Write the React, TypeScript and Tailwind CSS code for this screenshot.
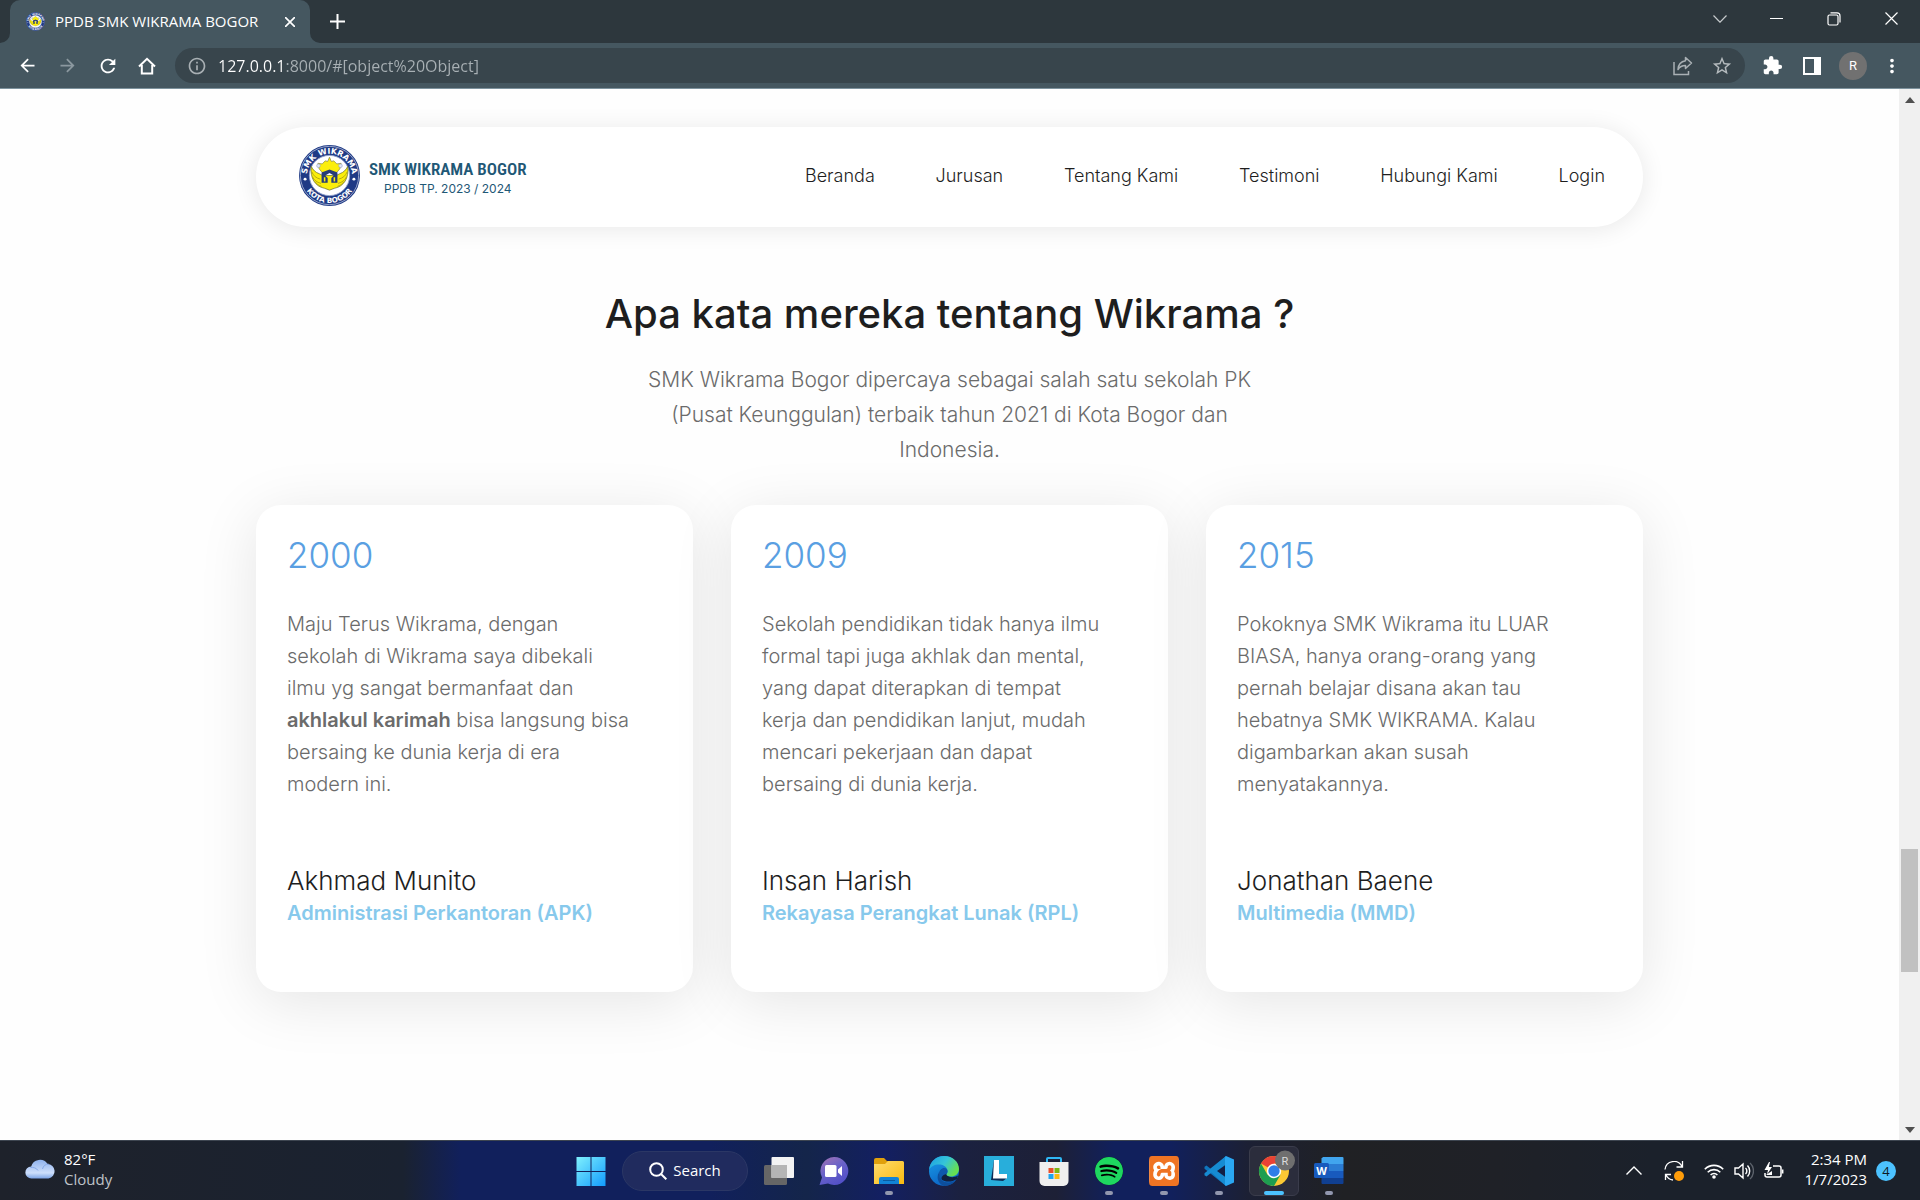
import type { ReactNode } from "react";
import {
  MdArrowBack,
  MdArrowForward,
  MdExtension,
  MdInfoOutline,
  MdMoreVert,
  MdRefresh,
  MdStarBorder,
} from "react-icons/md";
import { SiSpotify, SiXampp } from "react-icons/si";

const segoe = "font-['Open_Sans','Noto_Sans',sans-serif]";

function SchoolSeal({ id, className }: { id: string; className: string }) {
  return (
    <svg viewBox="0 0 100 100" className={className} aria-hidden="true">
      <defs>
        <path id={`${id}-top`} d="M14 60 A37 37 0 1 1 86 60" />
        <path id={`${id}-bottom`} d="M5 50 A45 45 0 0 0 95 50" />
      </defs>
      <circle cx="50" cy="50" r="50" fill="#1f3a85" />
      <circle cx="50" cy="50" r="47.8" fill="none" stroke="#dfe5f4" strokeWidth="1" />
      <circle cx="50" cy="50" r="33" fill="#fff" stroke="#8fa0cc" strokeWidth="1.5" />
      <path
        d="M20 35c-2 19 6 33 22 36l8 3 8-3c16-3 24-17 22-36-3 6-7 10-13 12l-6 3H39l-6-3c-6-2-10-6-13-12z"
        fill="#fbee0b"
        stroke="#6b7230"
        strokeWidth="1.2"
      />
      <path
        d="M31 30l7 1 5-5 4 1 3-7 3 7 4-1 5 5 7-1-2 9-5 6H38l-5-6z"
        fill="#fbee0b"
        stroke="#8a8a4a"
        strokeWidth="1.2"
      />
      <path
        d="M21 44c3 7 7 10 14 12M22 52c3 6 7 9 14 11M26 60c3 4 6 6 11 8M79 44c-3 7-7 10-14 12M78 52c-3 6-7 9-14 11M74 60c-3 4-6 6-11 8"
        fill="none"
        stroke="#a79a13"
        strokeWidth="1.3"
      />
      <circle cx="32" cy="34" r="3" fill="#dfe5f4" stroke="#8fa0cc" />
      <circle cx="68" cy="34" r="3" fill="#dfe5f4" stroke="#8fa0cc" />
      <path d="M37 45l13-5 13 5v17H53v-8l4-4-7-4-7 4 4 4v8H37z" fill="#263c78" />
      <path d="M42 53v7M58 53v7" stroke="#fbee0b" strokeWidth="2.5" />
      <circle cx="10" cy="56" r="2.4" fill="#fff" />
      <circle cx="90" cy="56" r="2.4" fill="#fff" />
      <text fill="#fff" fontSize="13" fontWeight="700" fontFamily="DejaVu Sans, sans-serif" textAnchor="middle">
        <textPath href={`#${id}-top`} startOffset="50%">
          SMK WIKRAMA
        </textPath>
      </text>
      <text fill="#fff" fontSize="12" fontWeight="700" fontFamily="DejaVu Sans, sans-serif" textAnchor="middle">
        <textPath href={`#${id}-bottom`} startOffset="50%">
          KOTA BOGOR
        </textPath>
      </text>
    </svg>
  );
}

function TabStrip() {
  return (
    <div className="flex h-[43px] items-end bg-[#2d373d] text-white">
      <div className="relative ml-[10px] flex h-full w-[300px] items-center rounded-t-[10px] bg-[#455760] pl-4 pr-3">
        <svg viewBox="0 0 10 10" className="absolute -left-[10px] bottom-0 size-[10px]" aria-hidden="true">
          <path d="M10 0v10H0A10 10 0 0 0 10 0z" fill="#455760" />
        </svg>
        <svg viewBox="0 0 10 10" className="absolute -right-[10px] bottom-0 size-[10px]" aria-hidden="true">
          <path d="M0 0v10h10A10 10 0 0 1 0 0z" fill="#455760" />
        </svg>
        <SchoolSeal id="favicon" className="size-[19px]" />
        <span className="ml-[10px] flex-1 whitespace-nowrap text-[15px]">PPDB SMK WIKRAMA BOGOR</span>
        <button aria-label="Close tab" className="flex size-4 items-center justify-center">
          <svg viewBox="0 0 10 10" className="size-[10px]" stroke="#fff" strokeWidth="1.7">
            <path d="M0 0l10 10M10 0L0 10" />
          </svg>
        </button>
      </div>
      <button aria-label="New tab" className="ml-5 flex h-full w-[15px] items-center">
        <svg viewBox="0 0 15 15" className="size-[15px]" stroke="#fff" strokeWidth="2">
          <path d="M7.500 0v15M0 7.500h15" />
        </svg>
      </button>
      <div className="ml-auto flex h-[37px] self-start">
        <button aria-label="Search tabs" className="flex w-[57px] items-center justify-center">
          <svg viewBox="0 0 14 8" className="h-2 w-[14px]" fill="none" stroke="#c7cbcd" strokeWidth="1.200">
            <path d="M.5.5L7 7.200 13.500.5" />
          </svg>
        </button>
        <button aria-label="Minimize" className="flex w-[57px] items-center justify-center">
          <span className="h-px w-[13px] bg-white" />
        </button>
        <button aria-label="Restore" className="flex w-[57px] items-center justify-center">
          <svg viewBox="0 0 14 14" className="size-[14px]" fill="none" stroke="#fff" strokeWidth="1.200">
            <rect x="1" y="3" width="10" height="10" rx="1.500" />
            <path d="M3.500.9h6.500a3 3 0 0 1 3 3v6.500" />
          </svg>
        </button>
        <button aria-label="Close window" className="flex w-[58px] items-center justify-center">
          <svg viewBox="0 0 13 13" className="size-[13px]" stroke="#fff" strokeWidth="1.200">
            <path d="M.5.5l12 12M12.500.5l-12 12" />
          </svg>
        </button>
      </div>
    </div>
  );
}

function Toolbar() {
  return (
    <div className="flex h-[46px] items-center border-b border-[#7d929d] bg-[#455760] pl-[17px] pr-[17px] text-white">
      <div className="flex items-center gap-[19px]">
        <button aria-label="Back">
          <MdArrowBack size={21} />
        </button>
        <button aria-label="Forward" className="text-[#8b989f]">
          <MdArrowForward size={21} />
        </button>
        <button aria-label="Reload">
          <MdRefresh size={22} />
        </button>
        <button aria-label="Home">
          <svg viewBox="0 0 18 18" className="size-[18px]" fill="none" stroke="#fff" strokeWidth="2">
            <path d="M1 9.500L9 1.800l8 7.700M3.800 8v8.500h10.400V8" />
          </svg>
        </button>
      </div>
      <div className="ml-[19px] mr-[17px] flex h-[35px] flex-1 items-center rounded-full bg-[#38454c] pl-3 pr-3">
        <MdInfoOutline size={20} className="text-[#a9b0b4]" />
        <input
          aria-label="Address"
          defaultValue="127.0.0.1:8000/#[object%20Object]"
          className="ml-[11px] h-7 flex-1 bg-[linear-gradient(90deg,#ffffff_68px,#a8b0b4_68px)] bg-clip-text text-base text-transparent caret-white outline-none"
        />
        <div className="flex items-center gap-[18px]">
          <button aria-label="Share">
            <svg viewBox="0 0 20 20" className="size-5" fill="none" stroke="#a9b0b4" strokeWidth="1.500">
              <path d="M1 6v12.500h14.500V15" />
              <path d="M12.500 1.500l6 5.500-6 5.500V9.500C9 9.500 6.500 11 5 13.500c.3-5 3-8 7.500-8.700z" strokeLinejoin="round" />
            </svg>
          </button>
          <button aria-label="Bookmark" className="text-[#b5bbbe]">
            <MdStarBorder size={22} />
          </button>
        </div>
      </div>
      <div className="flex items-center">
        <button aria-label="Extensions">
          <MdExtension size={21} />
        </button>
        <button aria-label="Side panel" className="ml-5 flex h-[18px] w-[18px] border-2 border-white">
          <span className="ml-auto h-full w-[5px] bg-white" />
        </button>
        <button
          aria-label="Profile R"
          className="ml-[18px] flex size-7 items-center justify-center rounded-full bg-[#717171] font-[Roboto,sans-serif] text-[13px]"
        >
          R
        </button>
        <button aria-label="Menu" className="ml-[14px]">
          <MdMoreVert size={22} />
        </button>
      </div>
    </div>
  );
}

const links = ["Beranda", "Jurusan", "Tentang Kami", "Testimoni", "Hubungi Kami", "Login"];

function SiteHeader() {
  return (
    <header className="flex h-[100px] items-center rounded-full bg-white pb-1 pl-[43px] pr-[38px] shadow-[0_2px_25px_rgba(0,0,0,0.09)]">
      <a href="#beranda" className="flex items-center gap-[9px] text-[#1f5876]">
        <SchoolSeal id="brand" className="size-[61px]" />
        <span className="flex flex-col items-center pt-1">
          <span className="whitespace-nowrap font-['Liberation_Sans_Narrow','Roboto_Condensed','Liberation_Sans',sans-serif] text-[17px] leading-6 font-semibold">
            SMK WIKRAMA BOGOR
          </span>
          <span className="text-xs leading-4">PPDB TP. 2023 / 2024</span>
        </span>
      </a>
      <nav className="ml-auto flex w-[800px] justify-between text-[18px] font-light text-[#1e1e1e]">
        {links.map((name) => (
          <a key={name} href={`#${name.toLowerCase().replace(" ", "-")}`}>
            {name}
          </a>
        ))}
      </nav>
    </header>
  );
}

type Testimonial = { year: string; lines: ReactNode[]; name: string; major: string };

const testimonials: Testimonial[] = [
  {
    year: "2000",
    lines: [
      "Maju Terus Wikrama, dengan",
      "sekolah di Wikrama saya dibekali",
      "ilmu yg sangat bermanfaat dan",
      <>
        <b className="font-semibold">akhlakul karimah</b> bisa langsung bisa
      </>,
      "bersaing ke dunia kerja di era",
      "modern ini.",
    ],
    name: "Akhmad Munito",
    major: "Administrasi Perkantoran (APK)",
  },
  {
    year: "2009",
    lines: [
      "Sekolah pendidikan tidak hanya ilmu",
      "formal tapi juga akhlak dan mental,",
      "yang dapat diterapkan di tempat",
      "kerja dan pendidikan lanjut, mudah",
      "mencari pekerjaan dan dapat",
      "bersaing di dunia kerja.",
    ],
    name: "Insan Harish",
    major: "Rekayasa Perangkat Lunak (RPL)",
  },
  {
    year: "2015",
    lines: [
      "Pokoknya SMK Wikrama itu LUAR",
      "BIASA, hanya orang-orang yang",
      "pernah belajar disana akan tau",
      "hebatnya SMK WIKRAMA. Kalau",
      "digambarkan akan susah",
      "menyatakannya.",
    ],
    name: "Jonathan Baene",
    major: "Multimedia (MMD)",
  },
];

function TestimonialCard({ item }: { item: Testimonial }) {
  return (
    <article className="rounded-[25px] bg-white px-[31px] pb-[63px] pt-[26px] shadow-[0_10px_60px_rgba(0,0,0,0.1)]">
      <h3 className="text-[35px] leading-[48px] font-light text-[#5a9fe2]">{item.year}</h3>
      <p className="mt-[29px] whitespace-nowrap text-[20px] leading-[32px] font-light text-[#6b6b6b]">
        {item.lines.map((line, i) => (
          <span key={i} className="block">
            {line}
          </span>
        ))}
      </p>
      <h4 className="mt-[64px] text-[26px] leading-[34px] font-light text-[#1e1e1e]">{item.name}</h4>
      <p className="whitespace-nowrap text-[20px] leading-[31px] font-semibold text-[#87c9ec]">{item.major}</p>
    </article>
  );
}

function Scrollbar() {
  return (
    <div className="flex w-[21px] flex-col bg-[#f0f0f0]" aria-hidden="true">
      <div className="flex h-[21px] items-center justify-center">
        <svg viewBox="0 0 10 6" className="h-[6px] w-[10px]">
          <path d="M5 0l5 6H0z" fill="#505050" />
        </svg>
      </div>
      <div className="grow-[739]" />
      <div className="mx-[2px] grow-[123] bg-[#c1c1c1]" />
      <div className="grow-[147]" />
      <div className="flex h-[21px] items-center justify-center">
        <svg viewBox="0 0 10 6" className="h-[6px] w-[10px]">
          <path d="M0 0h10L5 6z" fill="#505050" />
        </svg>
      </div>
    </div>
  );
}

function WindowsIcon() {
  return (
    <svg viewBox="0 0 30 30" className="size-[30px]">
      <defs>
        <linearGradient id="win" x1="0" y1="0" x2="1" y2="1" gradientUnits="objectBoundingBox">
          <stop offset="0" stopColor="#7ff0fd" />
          <stop offset="1" stopColor="#129bfd" />
        </linearGradient>
      </defs>
      <path d="M.5 1h14v14H.5zM15.500 1h14v14h-14zM.5 16h14v14H.5zM15.500 16h14v14h-14z" fill="url(#win)" />
    </svg>
  );
}

function TaskViewIcon() {
  return (
    <svg viewBox="0 0 30 30" className="size-[30px]">
      <rect x="0" y="9" width="23" height="20" rx="1.500" fill="#666" />
      <rect x="7.500" y="1" width="22.500" height="21" rx="1" fill="#f3f3f3" />
      <path d="M7.500 9H23v13H7.500z" fill="#b5b5b5" />
    </svg>
  );
}

function TeamsChatIcon() {
  return (
    <svg viewBox="0 0 30 30" className="size-[30px]">
      <defs>
        <linearGradient id="chat" x1="0" y1="0" x2="0.600" y2="1">
          <stop offset="0" stopColor="#a874b0" />
          <stop offset="0.500" stopColor="#6a63c9" />
          <stop offset="1" stopColor="#5350c8" />
        </linearGradient>
      </defs>
      <path d="M15 1a14 14 0 1 1-6 26.500L.5 29 3 21.500A14 14 0 0 1 15 1z" fill="url(#chat)" />
      <rect x="6" y="9" width="11.500" height="12" rx="1.500" fill="#fff" />
      <path d="M19 13.500l4-3.500v10l-4-3.500z" fill="#fff" />
    </svg>
  );
}

function ExplorerIcon() {
  return (
    <svg viewBox="0 0 30 30" className="size-[30px]">
      <defs>
        <linearGradient id="folder" x1="0" y1="0" x2="1" y2="1">
          <stop offset="0" stopColor="#ffdc6e" />
          <stop offset="1" stopColor="#f9b90f" />
        </linearGradient>
      </defs>
      <path d="M0 4a2 2 0 0 1 2-2h8l3 3h9v5H0z" fill="#e0a00c" />
      <path d="M0 8h11l3-3h14.500A1.500 1.500 0 0 1 30 6.500V28H0z" fill="url(#folder)" />
      <path d="M5 28v-5a2 2 0 0 1 2-2h16a2 2 0 0 1 2 2v5z" fill="#1283d6" />
      <path d="M9 24.500h12" stroke="#0b5a9f" strokeWidth="1" />
    </svg>
  );
}

function EdgeIcon() {
  return (
    <svg viewBox="0 0 30 30" className="size-[30px]">
      <defs>
        <linearGradient id="edge-top" x1="0" y1="0" x2="1" y2="0.500">
          <stop offset="0" stopColor="#1b9de2" />
          <stop offset="0.550" stopColor="#35c4d8" />
          <stop offset="1" stopColor="#66e052" />
        </linearGradient>
        <linearGradient id="edge-left" x1="0" y1="0" x2="0.500" y2="1">
          <stop offset="0" stopColor="#1a9fe8" />
          <stop offset="1" stopColor="#0b63c5" />
        </linearGradient>
      </defs>
      <circle cx="15" cy="15" r="15" fill="url(#edge-left)" />
      <path d="M10 16c-1 7 5 11 10 10.500 4-.3 6.500-2 7.800-3.500A15 15 0 0 1 15 30C9 28 7 21 10 16z" fill="#0d4e9c" />
      <path d="M18 19c2 2.500 7 3 11 .5l-1 3.500c-6 4-16 3.500-17.500-3C10 16 12 13 15 12.500z" fill="#11203f" />
      <path d="M0 14C1 5 7.500 0 15 0c9 0 15 6 15 13 0 5-4 7.500-8 7.500-3 0-5-1-4.500-2.500 2-2 1.500-7-4-9C8 7.500 2 9.500 0 14z" fill="url(#edge-top)" />
      <path d="M17.500 18c2-2 1.200-5-1.500-6-3.500 0-6 2.500-6 6 0 3.500 2 6 4 7.500C11 22 13 19 17.500 18z" fill="#0f58ad" />
    </svg>
  );
}

function LIcon() {
  return (
    <svg viewBox="0 0 30 30" className="size-[30px]">
      <path d="M0 0h30v30H0z" fill="#28aedb" />
      <path d="M10 4L7 24l12 1 4-3-13-2z" fill="#0e2d55" />
      <path d="M10 4h5v14h8v4.500H9z" fill="#fff" />
    </svg>
  );
}

function StoreIcon() {
  return (
    <svg viewBox="0 0 30 30" className="size-[30px]">
      <path d="M8 7V3a1 1 0 0 1 1-1h12a1 1 0 0 1 1 1v4" fill="none" stroke="#2fb7f4" strokeWidth="2" />
      <path d="M.5 6h29v19a5 5 0 0 1-5 5h-19a5 5 0 0 1-5-5z" fill="#efefef" />
      <path d="M9.500 12H14.500v5h-5z" fill="#e94f2a" />
      <path d="M15.500 12h5v5h-5z" fill="#7db713" />
      <path d="M9.500 18h5v5h-5z" fill="#1ea4ee" />
      <path d="M15.500 18h5v5h-5z" fill="#fbb913" />
    </svg>
  );
}

function VsCodeIcon() {
  return (
    <svg viewBox="0 0 30 30" className="size-[30px]">
      <path d="M22 0L7.500 13.500 2.500 9.500.5 10.800v2L22 30z" fill="#0f75bd" />
      <path d="M22 30L7.500 16.500l-5 4-2-1.300v-2L22 0z" fill="#168bd2" />
      <path d="M22 8.500L13 15l9 6.500z" fill="#121f45" />
      <path d="M22 0l8 3.500v23L22 30l-1-1.500V1.500z" fill="#2aa7f2" />
    </svg>
  );
}

function ChromeIcon() {
  return (
    <svg viewBox="0 0 36 36" className="-mt-[6px] ml-[6px] size-[36px] overflow-visible">
      <circle cx="15" cy="21" r="15" fill="#fcc934" />
      <path d="M15 21L2 13.500A15 15 0 0 1 28 13.500H15z" fill="#e94235" />
      <path d="M2 13.500A15 15 0 0 0 15 36l6.500-11.200L15 21l-6.500 3.700z" fill="#1e9e50" />
      <circle cx="15" cy="21" r="7.200" fill="#fff" />
      <circle cx="15" cy="21" r="5.700" fill="#2f7de9" />
      <circle cx="26" cy="10.500" r="10" fill="#6f6f6f" />
      <text x="26" y="14.500" fontSize="11" fill="#ddd" textAnchor="middle" fontFamily="Roboto, sans-serif">
        R
      </text>
    </svg>
  );
}

function WordIcon() {
  return (
    <svg viewBox="0 0 30 30" className="size-[30px]">
      <path d="M9 1h19.500a1 1 0 0 1 1 1v6H7.500V2.500z" fill="#41a5ee" />
      <path d="M7.500 8h22v7h-22z" fill="#2b7cd3" />
      <path d="M7.500 15h22v7h-22z" fill="#185abd" />
      <path d="M7.500 22h22v5a1 1 0 0 1-1 1H8.500a1 1 0 0 1-1-1z" fill="#103f91" />
      <rect x="0" y="7" width="15" height="15" rx="1.500" fill="#185abd" />
      <text x="7.500" y="18.500" fontSize="11" fontWeight="700" fill="#fff" textAnchor="middle" fontFamily="Open Sans, sans-serif">
        W
      </text>
    </svg>
  );
}

const apps: { name: string; icon: ReactNode; state?: "running" | "active" }[] = [
  { name: "Task View", icon: <TaskViewIcon /> },
  { name: "Chat", icon: <TeamsChatIcon /> },
  { name: "File Explorer", icon: <ExplorerIcon />, state: "running" },
  { name: "Edge", icon: <EdgeIcon /> },
  { name: "Lenovo", icon: <LIcon /> },
  { name: "Store", icon: <StoreIcon /> },
  {
    name: "Spotify",
    icon: (
      <span className="rounded-full bg-black">
        <SiSpotify size={28} color="#1ed760" />
      </span>
    ),
    state: "running",
  },
  {
    name: "XAMPP",
    icon: (
      <span className="rounded-md bg-white">
        <SiXampp size={30} color="#ef7423" />
      </span>
    ),
    state: "running",
  },
  { name: "Visual Studio Code", icon: <VsCodeIcon />, state: "running" },
  { name: "Chrome", icon: <ChromeIcon />, state: "active" },
  { name: "Word", icon: <WordIcon />, state: "running" },
];

function Taskbar() {
  return (
    <footer className="grid h-[60px] grid-cols-[1fr_auto_1fr] items-center border-t border-[#3d4550] bg-[linear-gradient(90deg,#1e222b_0%,#1a2230_21%,#11205c_24%,#11205c_37%,#14254a_42%,#131f62_46%,#1b2140_50%,#1d2036_55%,#11205c_58%,#11205c_61%,#1c2034_65%,#202124_70%,#1f2127_78%,#1b212b_86%,#1b212b_100%)] text-white">
      <button className="ml-[25px] flex items-center gap-2 justify-self-start pb-1 text-left">
        <svg viewBox="0 0 31 21" className="h-[21px] w-[31px]" aria-hidden="true">
          <defs>
            <linearGradient id="cloud" x1="0" y1="0" x2="0" y2="1">
              <stop offset="0" stopColor="#8fb2ee" />
              <stop offset="0.700" stopColor="#cddffb" />
              <stop offset="1" stopColor="#7ca4e6" />
            </linearGradient>
          </defs>
          <path d="M6.500 20.500a6 6 0 0 1-.3-12A9 9 0 0 1 22.500 6a7.300 7.300 0 0 1 1 14.500z" fill="url(#cloud)" />
          <path d="M5.500 9.500c3-.5 6 .5 7.500 3M17.500 11c.6-3 3-5 6-5" fill="none" stroke="#86aaea" strokeWidth="1" />
        </svg>
        <span className="flex flex-col text-[15px] leading-5">
          <span>82°F</span>
          <span className="text-[#bfc3c8]">Cloudy</span>
        </span>
      </button>
      <div className="flex items-center gap-[5px]">
        <button aria-label="Start" className="flex size-[50px] items-center justify-center">
          <WindowsIcon />
        </button>
        <button className="mx-px flex h-10 w-[126px] items-center justify-center gap-[6px] rounded-full border border-[#2b3765] bg-[#202b5e] text-[15px]">
          <svg viewBox="0 0 18 18" className="size-[18px]" fill="none" stroke="#fff" strokeWidth="2">
            <circle cx="7.500" cy="7.500" r="6.300" />
            <path d="M12 12l5.300 5.300" />
          </svg>
          Search
        </button>
        {apps.map(({ name, icon, state }) => (
          <button
            key={name}
            aria-label={name}
            className={
              state === "active"
                ? "relative flex size-[50px] items-center justify-center rounded-md border border-[#3a3c4b] bg-[#2b2d3c]"
                : "relative flex size-[50px] items-center justify-center"
            }
          >
            {icon}
            {state === "running" && <span className="absolute bottom-px h-1 w-2 rounded-full bg-[#9297ae]" />}
            {state === "active" && <span className="absolute bottom-0 h-1 w-5 rounded-full bg-[#4cc2ff]" />}
          </button>
        ))}
      </div>
      <div className="mr-6 flex items-center justify-self-end">
        <button aria-label="Show hidden icons">
          <svg viewBox="0 0 16 9" className="h-[9px] w-4" fill="none" stroke="#fff" strokeWidth="1.400">
            <path d="M.5 8.500L8 1l7.500 7.500" />
          </svg>
        </button>
        <button aria-label="Update" className="ml-[22px]">
          <svg viewBox="0 0 20 20" className="size-5" fill="none" stroke="#fff" strokeWidth="1.300">
            <path d="M1 8.500A9 9 0 0 1 18 5.500M18.500 0v6h-6M9 19a9 9 0 0 1-7-5M7 13.500H1.500V19" />
            <circle cx="15" cy="15" r="5" fill="#ff9d0a" stroke="none" />
          </svg>
        </button>
        <button aria-label="Network, volume and battery" className="ml-5 flex items-center gap-[10px]">
          <svg viewBox="0 0 20 16" className="h-4 w-5" fill="none" stroke="#fff" strokeWidth="1.600">
            <path d="M.8 6.200a13 13 0 0 1 18.400 0M3.700 9.200a9 9 0 0 1 12.600 0M6.600 12a5 5 0 0 1 6.800 0" />
            <circle cx="10" cy="14" r="1.800" fill="#fff" stroke="none" />
          </svg>
          <svg viewBox="0 0 20 18" className="h-[18px] w-5" fill="none" stroke="#fff" strokeWidth="1.400">
            <path d="M1 6h3.500L9 2v14l-4.500-4H1zM11.500 6a4 4 0 0 1 0 6M13.500 3.500a8 8 0 0 1 0 11" />
            <path d="M16 1a11 11 0 0 1 0 16" stroke="#5c626b" />
          </svg>
          <svg viewBox="0 0 20 18" className="h-[18px] w-5" fill="none" stroke="#fff" strokeWidth="1.500">
            <path d="M9 4h6a2 2 0 0 1 2 2v7a2 2 0 0 1-2 2H3a2 2 0 0 1-2-2v-2M18.700 7.500v4" />
            <path d="M5 0L.5 8H4l-1 4.500L8 5H4.800L6 0zM2 13h6V9z" fill="#fff" stroke="none" />
          </svg>
        </button>
        <button className="ml-[21px] flex flex-col items-end pb-1 text-[15px] leading-5">
          <span>2:34 PM</span>
          <span>1/7/2023</span>
        </button>
        <button
          aria-label="4 notifications"
          className="ml-[9px] flex size-5 items-center justify-center rounded-full bg-[#4cc2ff] text-[13px] leading-5 text-[#0d1a26]"
        >
          4
        </button>
      </div>
    </footer>
  );
}

export default function App() {
  return (
    <div className={`flex h-screen flex-col overflow-hidden bg-white ${segoe}`}>
      <TabStrip />
      <Toolbar />
      <div className="flex min-h-0 flex-1">
        <main className="min-w-0 flex-1 overflow-hidden bg-[#fefefe] px-8 pt-[38px] font-[Inter,'Noto_Sans',sans-serif]">
          <div className="mx-auto max-w-[1387px]">
            <SiteHeader />
            <section className="pt-[60px] text-center">
              <h2 className="text-[40px] leading-[54px] font-medium text-[#1e1e1e]">Apa kata mereka tentang Wikrama ?</h2>
              <p className="mt-[21px] text-[21px] leading-[35px] font-light text-[#6b6b6b]">
                SMK Wikrama Bogor dipercaya sebagai salah satu sekolah PK
                <br />
                (Pusat Keunggulan) terbaik tahun 2021 di Kota Bogor dan
                <br />
                Indonesia.
              </p>
            </section>
            <section className="mt-[38px] grid grid-cols-3 gap-[38px]">
              {testimonials.map((item) => (
                <TestimonialCard key={item.year} item={item} />
              ))}
            </section>
          </div>
        </main>
        <Scrollbar />
      </div>
      <Taskbar />
    </div>
  );
}
